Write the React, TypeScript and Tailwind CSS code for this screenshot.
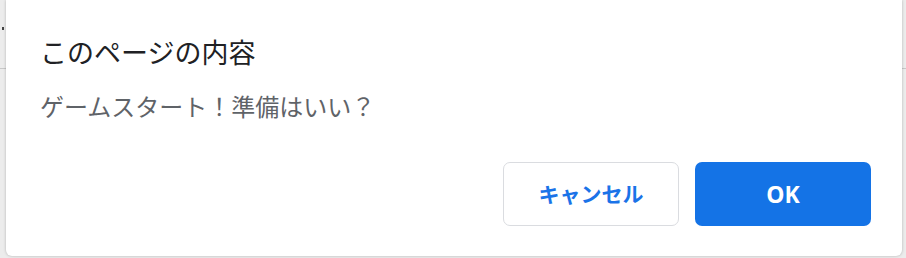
import React from 'react';

export default function App() {
  const font = { fontFamily: '"Noto Sans CJK JP", "Noto Sans", sans-serif' };
  return (
    <div className="w-[906px] h-[258px] bg-[#ececec] overflow-hidden relative" style={font}>
      {/* page behind the dialog */}
      <div className="absolute left-0 right-0 top-[68px] h-px bg-[#c8c8c8]" />
      <div className="absolute left-[2px] top-[27px] w-[2px] h-[3px] bg-[#444]" />

      <div className="relative ml-[6px] w-[896px] h-[256px] bg-white rounded-b-[6px] shadow-[0_0_3px_rgba(0,0,0,0.25)] flex flex-col">
        <div className="pl-[34px] pt-[33px] text-[27px] leading-[38px] text-[#202124]">このページの内容</div>
        <div className="pl-[34px] pt-[18px] text-[24px] leading-[34px] text-[#5f6368]">ゲームスタート！準備はいい？</div>
        <div className="flex justify-end gap-[16px] pr-[31px] pt-[39px]">
          <button className="w-[176px] h-[64px] rounded-[7px] border border-[#dadce0] bg-white text-[#1a73e8] text-[21px] font-bold">
            キャンセル
          </button>
          <button className="w-[176px] h-[64px] rounded-[7px] bg-[#1473e6] text-white text-[23px] font-bold" style={{ fontFamily: '"Noto Sans", sans-serif' }}>
            OK
          </button>
        </div>
      </div>
    </div>
  );
}
